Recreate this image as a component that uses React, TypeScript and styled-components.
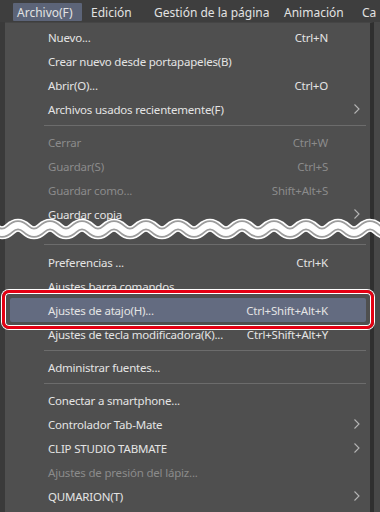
import styled, { createGlobalStyle } from 'styled-components'

type Entry =
	| { kind: 'item'; label: string; shortcut?: string; sub?: boolean; disabled?: boolean; active?: boolean }
	| { kind: 'sep'; torn?: boolean }

const topMenus = ['Archivo(F)', 'Edición', 'Gestión de la página', 'Animación', 'Ca']

const entries: Entry[] = [
	{ kind: 'item', label: 'Nuevo...', shortcut: 'Ctrl+N' },
	{ kind: 'item', label: 'Crear nuevo desde portapapeles(B)' },
	{ kind: 'item', label: 'Abrir(O)...', shortcut: 'Ctrl+O' },
	{ kind: 'item', label: 'Archivos usados recientemente(F)', sub: true },
	{ kind: 'sep' },
	{ kind: 'item', label: 'Cerrar', shortcut: 'Ctrl+W', disabled: true },
	{ kind: 'item', label: 'Guardar(S)', shortcut: 'Ctrl+S', disabled: true },
	{ kind: 'item', label: 'Guardar como...', shortcut: 'Shift+Alt+S', disabled: true },
	{ kind: 'item', label: 'Guardar copia', sub: true },
	{ kind: 'sep', torn: true },
	{ kind: 'item', label: 'Preferencias ...', shortcut: 'Ctrl+K' },
	{ kind: 'item', label: 'Ajustes barra comandos...' },
	{ kind: 'item', label: 'Ajustes de atajo(H)...', shortcut: 'Ctrl+Shift+Alt+K', active: true },
	{ kind: 'item', label: 'Ajustes de tecla modificadora(K)...', shortcut: 'Ctrl+Shift+Alt+Y' },
	{ kind: 'sep' },
	{ kind: 'item', label: 'Administrar fuentes...' },
	{ kind: 'sep' },
	{ kind: 'item', label: 'Conectar a smartphone...' },
	{ kind: 'item', label: 'Controlador Tab-Mate', sub: true },
	{ kind: 'item', label: 'CLIP STUDIO TABMATE', sub: true },
	{ kind: 'item', label: 'Ajustes de presión del lápiz...', disabled: true },
	{ kind: 'item', label: 'QUMARION(T)', sub: true },
	{ kind: 'sep' },
]

function wavePath() {
	let d = 'M-22 229 q8 -7.5 16 0'
	for (let i = 0; i < 26; i++) d += ' t16 0'
	return d
}

function Chevron() {
	return (
		<svg width='6' height='10' viewBox='0 0 6 10'>
			<path d='M0.5 0.5 L5 5 L0.5 9.5' fill='none' stroke='currentColor' strokeWidth='1.1' />
		</svg>
	)
}

function App() {
	return (
		<Screen>
			<GlobalStyle />
			<MenuBar>
				{topMenus.map((m, i) => (
					<TopItem key={m} $open={i === 0}>
						{m}
					</TopItem>
				))}
			</MenuBar>
			<Body>
				<LeftStrip />
				<Dropdown>
					{entries.map((e, i) =>
						e.kind === 'sep' ? (
							<Separator key={i} $torn={e.torn} />
						) : (
							<Row key={i} $disabled={e.disabled} $active={e.active}>
								<span>{e.label}</span>
								<Shortcut>{e.shortcut}</Shortcut>
								<ArrowCell>{e.sub && <Chevron />}</ArrowCell>
							</Row>
						)
					)}
				</Dropdown>
				<RightStrip />
			</Body>
			<Tear width='380' height='30' viewBox='0 214 380 30'>
				<path d={wavePath()} fill='none' stroke='#ffffff' strokeWidth='13' />
				<path d={wavePath()} fill='none' stroke='#9c9c9c' strokeWidth='9.5' />
				<path d={wavePath()} fill='none' stroke='#ffffff' strokeWidth='6' />
			</Tear>
		</Screen>
	)
}

const GlobalStyle = createGlobalStyle`
	body {
		margin: 0;
		background: #3a3a3a;
	}
`

const Screen = styled.div`
	position: relative;
	width: 380px;
	height: 512px;
	overflow: hidden;
	background: #3a3a3a;
	font-family: 'Noto Sans', 'Segoe UI', sans-serif;
	font-size: 11.5px;
	letter-spacing: -0.2px;
`

const MenuBar = styled.div`
	display: grid;
	grid-template-columns: 69px 63px 130px 78px auto;
	align-items: center;
	height: 22px;
	padding-left: 13px;
	background: #3e3e3e;
	font-size: 12px;
	letter-spacing: 0;
`

const TopItem = styled.div<{ $open?: boolean }>`
	display: flex;
	align-items: center;
	height: 18px;
	margin-top: 2px;
	padding-left: ${(p) => (p.$open ? '4px' : '9px')};
	white-space: nowrap;
	color: #e2e2e2;
	background: ${(p) => (p.$open ? '#5c6478' : 'transparent')};
	border-radius: 1px;
`

const Body = styled.div`
	display: flex;
	height: 490px;
`

const LeftStrip = styled.div`
	width: 5px;
	background: #3a3a3a;
`

const Dropdown = styled.div`
	width: 356px;
	padding: 2px 4px 0 5px;
	background: #4f4f4f;
	border-top: 1px solid #454545;
	border-right: 4px solid #2f2f2f;
	display: flex;
	flex-direction: column;
`

const RightStrip = styled.div`
	flex: 1;
	background: #484848;
`

const Row = styled.div<{ $disabled?: boolean; $active?: boolean }>`
	position: relative;
	display: grid;
	grid-template-columns: 1fr auto 38px;
	align-items: center;
	height: 24px;
	flex-shrink: 0;
	padding-left: 38px;
	white-space: nowrap;
	color: ${(p) => (p.$disabled ? '#8b8b8b' : '#e4e4e4')};
	background: ${(p) => (p.$active ? '#636b80' : 'transparent')};
	border-radius: 2px;

	${(p) =>
		p.$active &&
		`
		&::after {
			content: '';
			position: absolute;
			inset: -8px -8px -7px -8px;
			border: 3px solid #e50012;
			border-radius: 7px;
			box-shadow: 0 0 0 1px #ffffff, inset 0 0 0 1px #ffffff;
			z-index: 2;
		}
	`}
`

const Shortcut = styled.span`
	text-align: right;
`

const ArrowCell = styled.span`
	display: flex;
	justify-content: flex-end;
	padding-right: 6px;
	color: #b5b5b5;
`

const Separator = styled.div<{ $torn?: boolean }>`
	flex-shrink: 0;
	height: ${(p) => (p.$torn ? '19px' : '9px')};
	display: flex;
	align-items: ${(p) => (p.$torn ? 'flex-end' : 'center')};
	padding: ${(p) => (p.$torn ? '0 0 5px 34px' : '0 0 0 34px')};

	&::before {
		content: '';
		flex: 1;
		height: 1px;
		background: #6c6c6c;
	}
`

const Tear = styled.svg`
	position: absolute;
	left: 0;
	top: 214px;
	z-index: 3;
`

export default App
